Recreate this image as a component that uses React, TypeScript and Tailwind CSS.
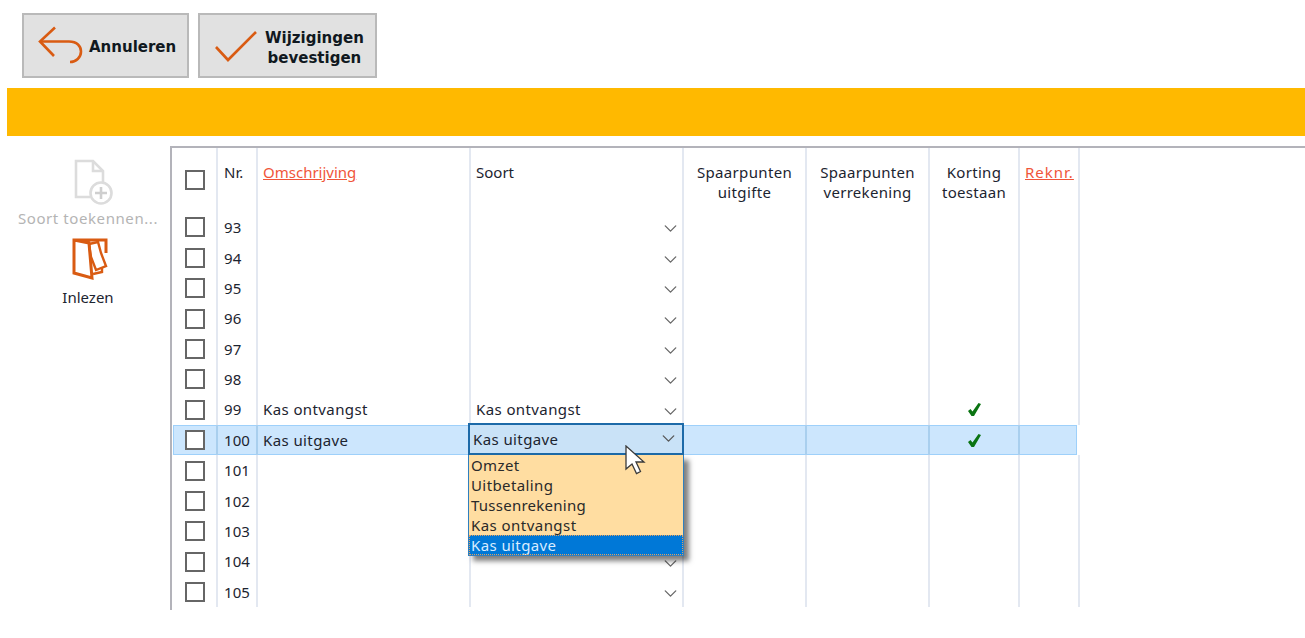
import React from 'react';
import { ChevronDown } from 'lucide-react';

const font = { fontFamily: '"Noto Sans", "Liberation Sans", sans-serif' };

const rows = [
  { nr: 93 },
  { nr: 94 },
  { nr: 95 },
  { nr: 96 },
  { nr: 97 },
  { nr: 98 },
  { nr: 99, name: 'Kas ontvangst', soort: 'Kas ontvangst', korting: true },
  { nr: 100, name: 'Kas uitgave', soort: 'Kas uitgave', korting: true, selected: true },
  { nr: 101 },
  { nr: 102 },
  { nr: 103 },
  { nr: 104 },
  { nr: 105 },
];

const options = [
  { label: 'Omzet', spacing: '' },
  { label: 'Uitbetaling', spacing: '' },
  { label: 'Tussenrekening', spacing: 'tracking-[0.25px]' },
  { label: 'Kas ontvangst', spacing: 'tracking-[0.45px]' },
  { label: 'Kas uitgave', spacing: 'tracking-[0.4px]' },
];

function Checkbox() {
  return <div className="w-[20px] h-[20px] border-2 border-[#666666] bg-white shrink-0" />;
}

function UndoIcon() {
  return (
    <svg width="46" height="40" viewBox="0 0 46 40" fill="none" stroke="#d95b12" strokeWidth="2.6" className="shrink-0">
      <path d="M17 1.500 2 15.500 16 30" />
      <path d="M2 15.500h29c8 0 12 4.500 12 10 0 6-5 10.500-11 10.500" />
    </svg>
  );
}

function CheckIcon() {
  return (
    <svg width="42" height="31" viewBox="0 0 42 31" fill="none" stroke="#d95b12" strokeWidth="2.6" className="shrink-0 mt-[2px]">
      <path d="M1 16 13 29 41 1" />
    </svg>
  );
}

function DocPlusIcon() {
  return (
    <svg width="42" height="46" viewBox="0 0 42 46" fill="none" stroke="#dcdcdc" strokeWidth="2.6" className="ml-[14px]">
      <path d="M16 38H2V2h17l10 10v12" />
      <path d="M19 2v10h10" />
      <circle cx="27" cy="34" r="10.500" fill="#ffffff" />
      <path d="M27 28v12M21 34h12" stroke="#cfcfcf" />
    </svg>
  );
}

function ReadIcon() {
  return (
    <svg width="36" height="44" viewBox="0 0 36 44" fill="none" stroke="#d95b12" strokeWidth="3" strokeLinejoin="miter" className="ml-[4px]">
      <path d="M34 16V3H2v33l18 5-3-35L2 3" />
      <path d="M17 7l9-2 3 11 5 13-10 4-5-13z" strokeWidth="2.4" />
      <path d="M21 37l9-2v-4" strokeWidth="2.4" />
    </svg>
  );
}

function GreenCheck() {
  return (
    <svg width="15" height="15" viewBox="0 0 15 15">
      <path d="M1 9l2.500-2 2 2.500L11.500 1 14 2 7 14H4.500z" fill="#0a7412" />
    </svg>
  );
}

function Cursor() {
  return (
    <svg width="22" height="30" viewBox="0 0 22 30" className="absolute left-[156px] top-[22px] z-30">
      <path d="M2 1v23l6-5 4.500 9.500 4-2L12 17h8z" fill="#ffffff" stroke="#3a3a3a" strokeWidth="1.300" />
    </svg>
  );
}

function Dropdown() {
  return (
    <div className="absolute left-[-3px] top-[-2px] w-[216px] z-20">
      <div className="h-[32px] border-2 border-[#1d6aa8] bg-[#c9e2f7] flex items-center pl-[3px] justify-between text-[15px] tracking-[0.4px] text-[#1c2430]">
        <span>Kas uitgave</span>
        <ChevronDown size={21} strokeWidth={1.500} className="text-[#555555] mr-[3px]" />
      </div>
      <div className="border border-t-0 border-[#2f7fbf] bg-[#ffdda1] shadow-[5px_5px_5px_rgba(0,0,0,0.5)] text-[15px] leading-[20px] text-[#2a2a2a]">
        {options.map((o, i) =>
          i === 4 ? (
            <div key={o.label} className={`h-[20px] pl-[2px] bg-[#0078d7] text-[#d9ecff] outline-dotted outline-1 -outline-offset-1 outline-[#e0a060] ${o.spacing}`}>
              {o.label}
            </div>
          ) : (
            <div key={o.label} className={`h-[20px] pl-[2px] ${o.spacing}`}>
              {o.label}
            </div>
          )
        )}
      </div>
      <Cursor />
    </div>
  );
}

function Row({ row }: { row: (typeof rows)[number] }) {
  const line = row.selected ? 'border-r-2 border-[#a9cfee]' : 'border-r-2 border-[#e3e8f1]';
  return (
    <div className={`flex h-[30.4px] items-center text-[15px] text-[#1c2430] ${row.selected ? 'bg-[#cce6fd] shadow-[inset_0_0_0_1px_#9ed0fa] w-[904px] ml-[1px]' : 'w-[908px]'}`}>
      <div className={`${row.selected ? 'w-[45px] pl-[12px]' : 'w-[46px] pl-[13px]'} h-full flex items-center shrink-0 ${line}`}>
        <Checkbox />
      </div>
      <div className={`w-[40px] h-full flex items-center shrink-0 pl-[6px] tracking-[0.1px] ${line}`}>{row.nr}</div>
      <div className={`w-[213px] h-full flex items-center shrink-0 pl-[5px] tracking-[0.4px] ${line}`}>{row.name}</div>
      <div className={`w-[213px] h-full flex items-center justify-between shrink-0 pl-[5px] pr-[1px] relative tracking-[0.4px] ${line}`}>
        <span>{row.selected ? '' : row.soort}</span>
        <ChevronDown size={21} strokeWidth={1.500} className="text-[#666666] mt-[3px]" />
        {row.selected && <Dropdown />}
      </div>
      <div className={`w-[123px] h-full shrink-0 ${line}`} />
      <div className={`w-[123px] h-full shrink-0 ${line}`} />
      <div className={`w-[90px] h-full flex items-center justify-center shrink-0 ${line}`}>
        {row.korting && <GreenCheck />}
      </div>
      <div className={`h-full grow ${row.selected ? '' : 'border-r-2 border-[#e3e8f1]'}`} />
    </div>
  );
}

const headLine = 'border-r-2 border-[#e3e8f1] h-full shrink-0';

function TableHead() {
  return (
    <div className="flex h-[64.2px] w-[908px] text-[15px] leading-[20px] text-[#1c2430]">
      <div className={`w-[46px] pl-[13px] pt-[22px] ${headLine}`}>
        <Checkbox />
      </div>
      <div className={`w-[40px] pl-[6px] pt-[14px] ${headLine}`}>Nr.</div>
      <div className={`w-[213px] pl-[5px] pt-[14px] text-[#f0553a] underline ${headLine}`}>Omschrijving</div>
      <div className={`w-[213px] pl-[5px] pt-[14px] ${headLine}`}>Soort</div>
      <div className={`w-[123px] pt-[14px] text-center tracking-[0.35px] ${headLine}`}>
        Spaarpunten
        <br />
        uitgifte
      </div>
      <div className={`w-[123px] pt-[14px] text-center tracking-[0.3px] ${headLine}`}>
        Spaarpunten
        <br />
        verrekening
      </div>
      <div className={`w-[90px] pt-[14px] text-center tracking-[0.3px] ${headLine}`}>
        Korting
        <br />
        toestaan
      </div>
      <div className="grow h-full pl-[5px] pt-[14px] text-[#f0553a] underline tracking-[1px] border-r-2 border-[#e3e8f1]">Reknr.</div>
    </div>
  );
}

export default function App() {
  return (
    <div className="w-[1305px] h-[638px] overflow-hidden bg-white flex flex-col" style={font}>
      <div className="flex gap-[9px] pl-[22px] pt-[13px] h-[88px] shrink-0">
        <button className="w-[167px] h-[65px] bg-[#e1e1e1] border-2 border-[#b9b9b9] flex items-center pl-[14px] gap-[5px] text-[15px] font-bold text-[#101820]" style={{ fontFamily: '"DejaVu Sans", sans-serif' }}>
          <UndoIcon />
          <span className="mt-[4px]">Annuleren</span>
        </button>
        <button className="w-[179px] h-[65px] bg-[#e1e1e1] border-2 border-[#b9b9b9] flex items-center pl-[15px] gap-[8px] text-[15px] leading-[20px] font-bold text-[#101820]" style={{ fontFamily: '"DejaVu Sans", sans-serif' }}>
          <CheckIcon />
          <span className="text-center mt-[4px]">
            Wijzigingen
            <br />
            bevestigen
          </span>
        </button>
      </div>
      <div className="ml-[7px] h-[48px] bg-[#ffb900] shrink-0" />
      <div className="flex pl-[7px] pt-[10px] grow min-h-0">
        <div className="w-[163px] shrink-0 flex flex-col items-center pt-[13px] pr-[1px]">
          <div className="h-[47px]">
            <DocPlusIcon />
          </div>
          <div className="text-[15px] leading-[20px] mt-[2px] text-[#b4b4b4] tracking-[0.58px]">Soort toekennen...</div>
          <div className="mt-[9px] h-[44px]">
            <ReadIcon />
          </div>
          <div className="text-[15px] leading-[20px] mt-[6px] text-[#1c2430]">Inlezen</div>
        </div>
        <div className="grow h-[464px] border-t-2 border-l-2 border-[#b3b3ba] flex flex-col">
          <TableHead />
          {rows.map((r) => (
            <Row key={r.nr} row={r} />
          ))}
        </div>
      </div>
    </div>
  );
}
